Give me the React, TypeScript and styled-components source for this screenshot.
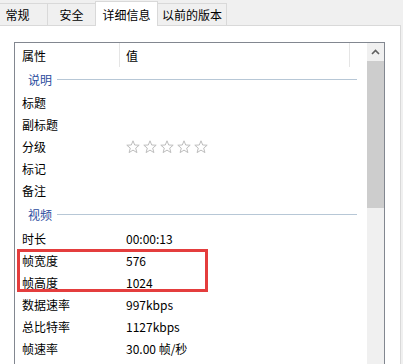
import styled, { createGlobalStyle } from "styled-components";

const GlobalStyle = createGlobalStyle`
  html, body {
    margin: 0;
    padding: 0;
    background: #f0f0f0;
  }
  body {
    font-family: "Noto Sans CJK SC", "Noto Sans", sans-serif;
    font-size: 12px;
    color: #000;
  }
`;

// 속성 목록
const descRows = [
  { label: "标题", value: "" },
  { label: "副标题", value: "" },
  { label: "分级", value: "stars" },
  { label: "标记", value: "" },
  { label: "备注", value: "" },
];

const videoTop = [{ label: "时长", value: "00:00:13" }];
const videoMarked = [
  { label: "帧宽度", value: "576" },
  { label: "帧高度", value: "1024" },
];
const videoRest = [
  { label: "数据速率", value: "997kbps" },
  { label: "总比特率", value: "1127kbps" },
  { label: "帧速率", value: "30.00 帧/秒" },
];

function Stars() {
  return (
    <StarRow>
      {[0, 1, 2, 3, 4].map((i) => (
        <svg key={i} width="14" height="14" viewBox="0 0 14 14">
          <polygon
            points="7,0.8 8.7,5 13.2,5.2 9.7,8.1 10.9,12.6 7,10.1 3.1,12.6 4.3,8.1 0.8,5.2 5.3,5"
            fill="#fff"
            stroke="#bdbdbd"
            strokeWidth="1"
            strokeLinejoin="round"
          />
        </svg>
      ))}
    </StarRow>
  );
}

function PropRow({ label, value }: { label: string; value: string }) {
  return (
    <Row>
      <Label>{label}</Label>
      <Value>{value === "stars" ? <Stars /> : value}</Value>
    </Row>
  );
}

function App() {
  return (
    <Window>
      <GlobalStyle />
      <TabBar>
        <Tab>常规</Tab>
        <Tab $w={47} $noRight>
          安全
        </Tab>
        <Tab $w={63} $active>
          详细信息
        </Tab>
        <Tab $w={69}>以前的版本</Tab>
      </TabBar>
      <Panel>
        <ListBox>
          <ListContent>
            <HeaderRow>
              <HeaderCell $w={105}>属性</HeaderCell>
              <HeaderCell $w={230}>值</HeaderCell>
            </HeaderRow>

            <GroupRow>
              <GroupTitle>说明</GroupTitle>
              <GroupLine />
            </GroupRow>
            {descRows.map((r) => (
              <PropRow key={r.label} {...r} />
            ))}

            <GroupRow $tall>
              <GroupTitle>视频</GroupTitle>
              <GroupLine />
            </GroupRow>
            {videoTop.map((r) => (
              <PropRow key={r.label} {...r} />
            ))}
            <Marked>
              {videoMarked.map((r) => (
                <PropRow key={r.label} {...r} />
              ))}
            </Marked>
            {videoRest.map((r) => (
              <PropRow key={r.label} {...r} />
            ))}
          </ListContent>

          <ScrollBar>
            <ScrollButton>
              <svg width="9" height="6" viewBox="0 0 9 6">
                <polyline points="1,5 4.5,1.5 8,5" fill="none" stroke="#606060" strokeWidth="1.6" />
              </svg>
            </ScrollButton>
            <Thumb />
          </ScrollBar>
        </ListBox>
      </Panel>
    </Window>
  );
}

export default App;

const Window = styled.div`
  width: 403px;
  height: 364px;
  overflow: hidden;
  background: #f0f0f0;
`;

const TabBar = styled.div`
  height: 25px;
  display: flex;
  align-items: flex-end;
`;

const Tab = styled.div<{ $w?: number; $active?: boolean; $noRight?: boolean }>`
  box-sizing: border-box;
  width: ${({ $w }) => $w ?? 60}px;
  height: ${({ $active }) => ($active ? 25 : 22)}px;
  margin-bottom: ${({ $active }) => ($active ? -1 : 0)}px;
  display: flex;
  align-items: center;
  justify-content: center;
  background: ${({ $active }) => ($active ? "#fff" : "#f0f0f0")};
  border-top: 1px solid #d9d9d9;
  border-right: ${({ $noRight }) => ($noRight ? "none" : "1px solid #d9d9d9")};
  border-left: ${({ $active }) => ($active ? "1px solid #d9d9d9" : "none")};
  position: relative;
  z-index: ${({ $active }) => ($active ? 1 : 0)};
  white-space: nowrap;

  &:first-child {
    margin-left: -12px;
  }
`;

const Panel = styled.div`
  box-sizing: border-box;
  width: 401px;
  height: 400px;
  background: #fff;
  border-top: 1px solid #d9d9d9;
  border-right: 1px solid #d9d9d9;
  padding: 16px 0 0 14px;
`;

const ListBox = styled.div`
  box-sizing: border-box;
  width: 371px;
  height: 380px;
  border: 1px solid #828790;
  display: flex;
`;

const ListContent = styled.div`
  flex: 1;
  display: flex;
  flex-direction: column;
`;

const HeaderRow = styled.div`
  height: 24px;
  display: flex;
`;

const HeaderCell = styled.div<{ $w: number }>`
  box-sizing: border-box;
  width: ${({ $w }) => $w}px;
  height: 24px;
  display: flex;
  align-items: center;
  padding-left: 7px;
  border-right: 1px solid #e5e5e5;

  & + & {
    padding-left: 6px;
  }
`;

const GroupRow = styled.div<{ $tall?: boolean }>`
  height: ${({ $tall }) => ($tall ? 26 : 24)}px;
  display: flex;
  align-items: center;
  gap: 5px;
  padding: 0 10px 0 13px;
`;

const GroupTitle = styled.span`
  color: #2b4c9e;
`;

const GroupLine = styled.div`
  flex: 1;
  height: 1px;
  background: #b7c7d6;
`;

const Row = styled.div`
  height: 22px;
  display: grid;
  grid-template-columns: 105px 1fr;
  align-items: center;
`;

const Label = styled.div`
  padding-left: 7px;
`;

const Value = styled.div`
  padding-left: 6px;
  display: flex;
  align-items: center;
`;

const StarRow = styled.div`
  display: flex;
  gap: 3px;
  padding-top: 2px;
`;

const Marked = styled.div`
  position: relative;

  &::after {
    content: "";
    position: absolute;
    left: 2px;
    top: 0;
    width: 191px;
    height: 43px;
    box-sizing: border-box;
    border: 3px solid #e43d3d;
  }
`;

const ScrollBar = styled.div`
  width: 17px;
  background: #f0f0f0;
  display: flex;
  flex-direction: column;
`;

const ScrollButton = styled.div`
  height: 18px;
  display: flex;
  align-items: center;
  justify-content: center;
`;

const Thumb = styled.div`
  height: 147px;
  background: #cdcdcd;
`;
